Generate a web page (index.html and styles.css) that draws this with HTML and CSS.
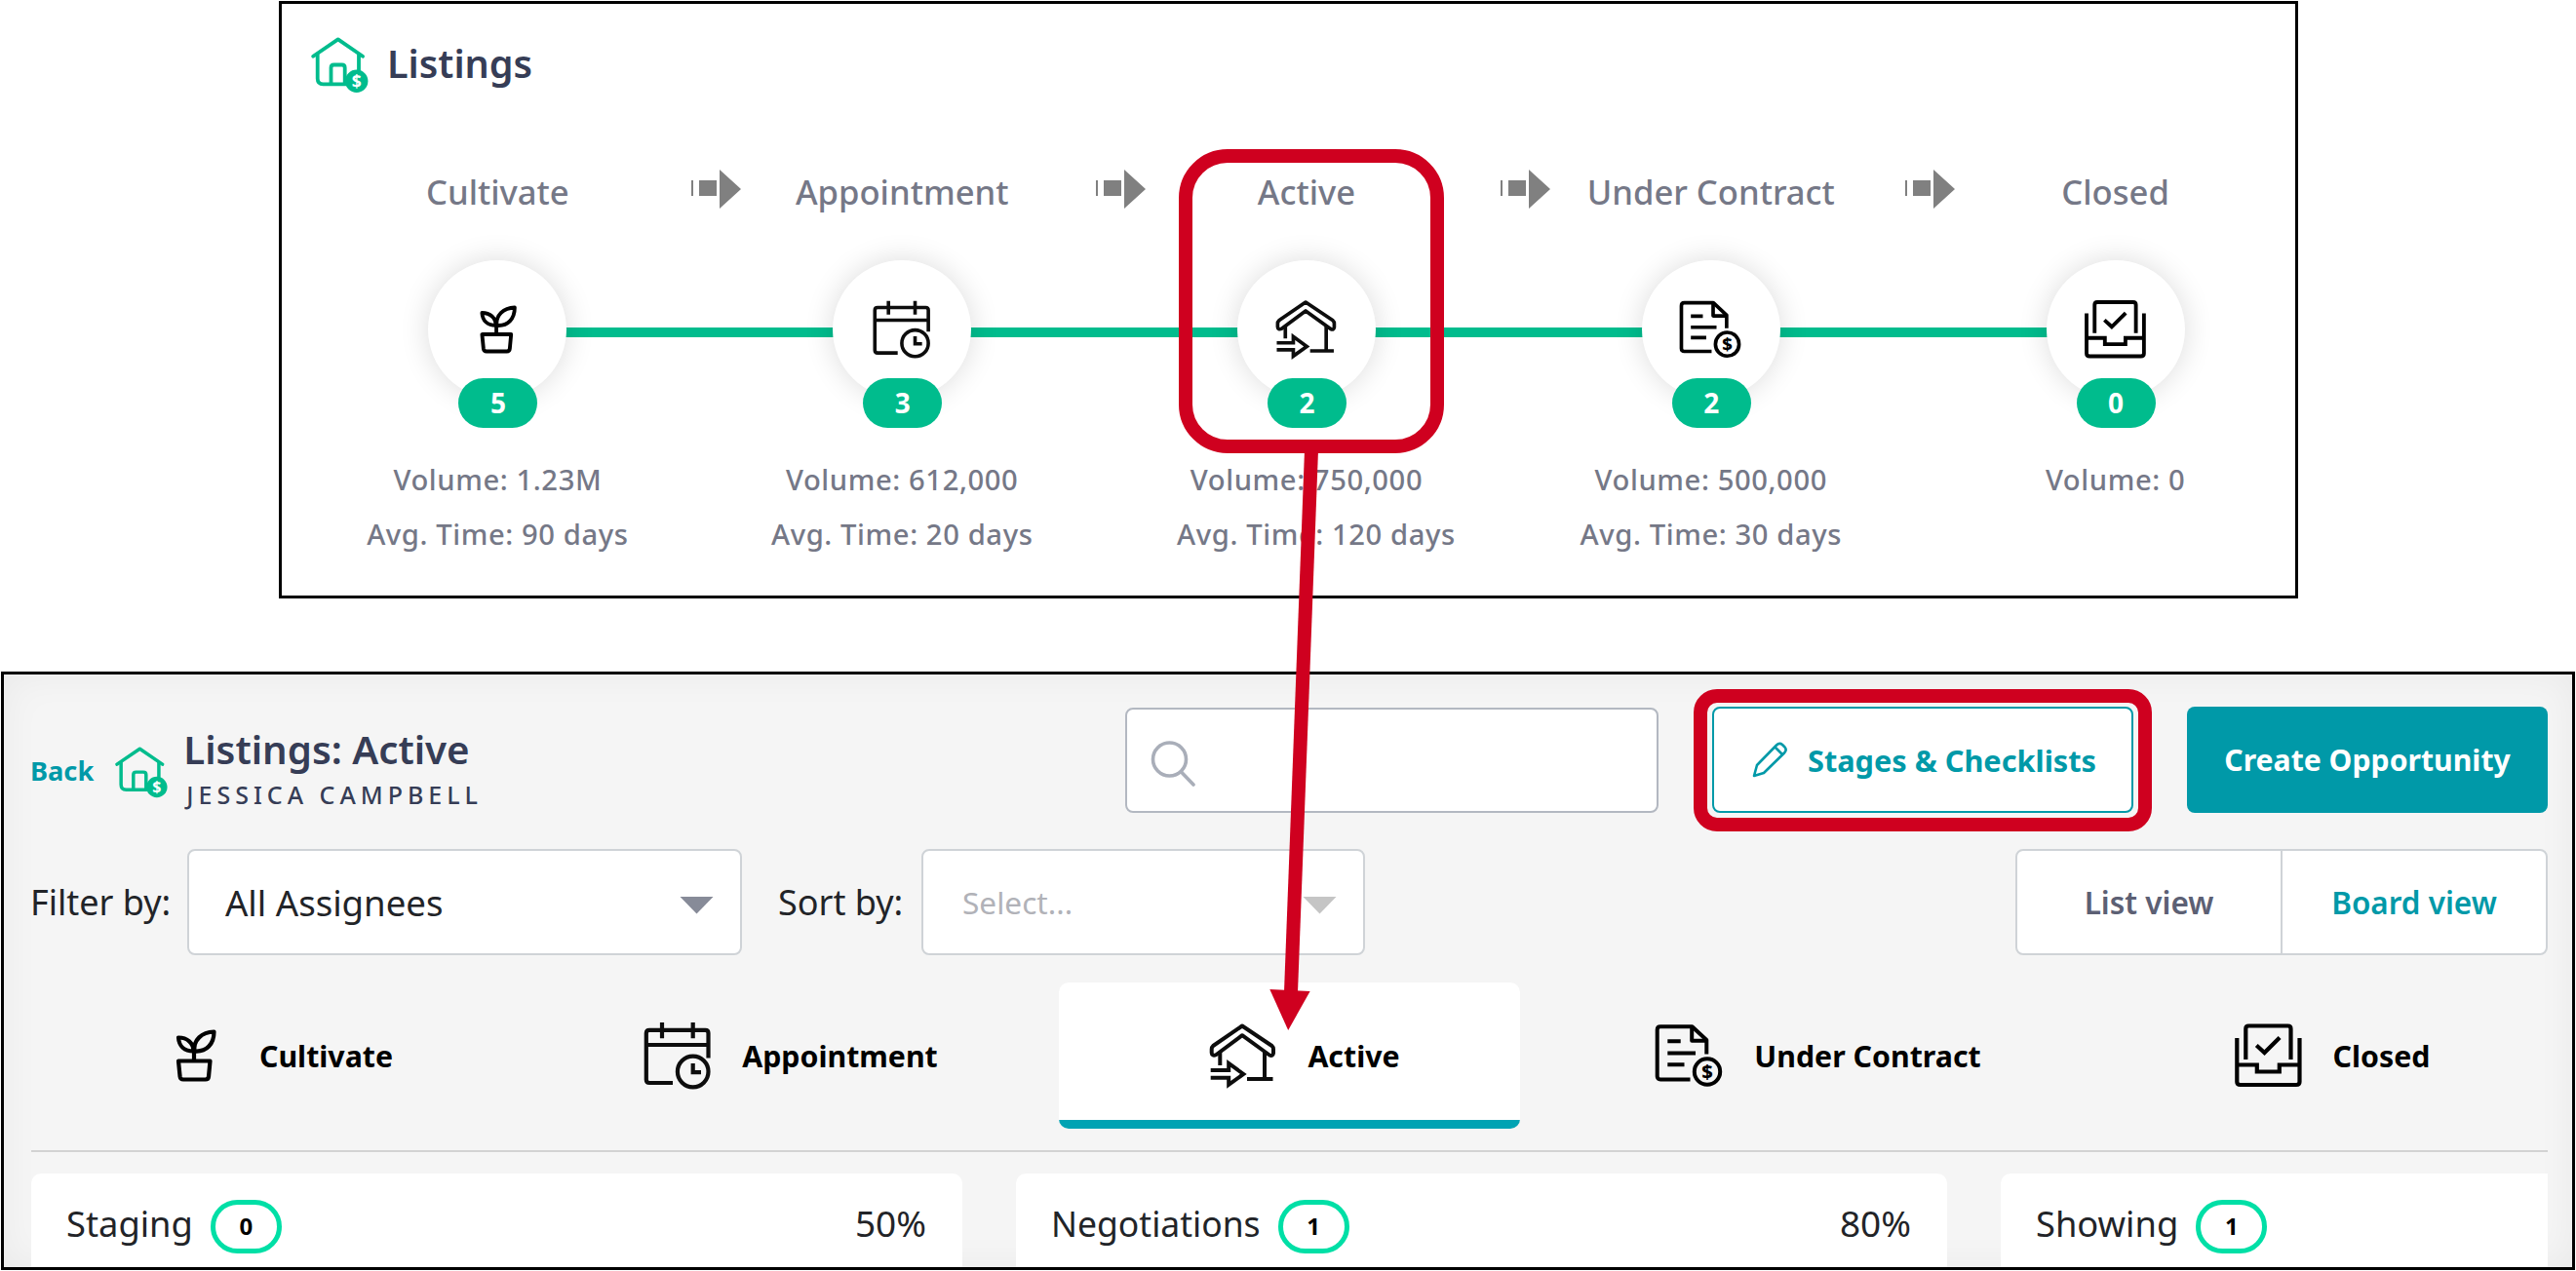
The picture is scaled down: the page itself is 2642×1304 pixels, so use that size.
FILE: index.html
```html
<!DOCTYPE html>
<html lang="en">
<head>
  <meta charset="UTF-8" />
  <title>Listings</title>
  <meta name="viewport" content="width=device-width, initial-scale=1.0" />
  <link rel="stylesheet" href="styles.css">
</head>
<body>
  <!-- Shared icons -->
  <svg class="sprite" width="0" height="0" aria-hidden="true">
    <symbol id="icon-listing" viewBox="0 0 60 60">
      <g fill="none" stroke="#00bc8d" stroke-width="3.8" stroke-linejoin="round" stroke-linecap="round">
        <path d="M2.2 19.8 27.7 2.4 53 19.8" />
        <path d="M6.7 18V42.5Q6.7 48.3 12.5 48.3H38M49 18V34" />
        <path d="M20.5 48V31.5Q20.5 28.5 23.5 28.5H31.7Q34.7 28.5 34.7 31.5V47" />
      </g>
      <circle cx="46.7" cy="45.3" r="11.7" fill="#00bc8d" />
      <text x="46.7" y="51.6" text-anchor="middle" font-size="17.5" font-weight="700" fill="#fff">$</text>
    </symbol>
    <symbol id="icon-cultivate" viewBox="0 0 72 72">
      <g fill="none" stroke="#000" stroke-width="4.2" stroke-linejoin="round">
        <path d="M35 41V31" />
        <path d="M35.5 31.5C34 20 43 12 55.5 11.5C55.5 24 48 32.5 35.5 31.5Z" />
        <path d="M34.5 31.5C25 31.5 19.5 26 19 17.5C28 17.5 34.5 23 34.5 31.5Z" />
        <path d="M19 41.5H51.5L50 57.5Q49.7 60.5 46.7 60.5H24Q21 60.5 20.6 57.5Z" />
      </g>
    </symbol>
    <symbol id="icon-appointment" viewBox="0 0 72 72">
      <g fill="none" stroke="#0d0d0d" stroke-width="4.2">
        <path d="M31 64H7Q3.8 64 3.8 60.8V13Q3.8 9.8 7 9.8H64.3Q67.5 9.8 67.5 13V38.5" />
        <path d="M3.8 25H67.5M20 2V18.3M51.7 2V18.3" />
        <circle cx="51.7" cy="52.5" r="15.8" />
        <path d="M51.7 44V53.2H60" />
      </g>
    </symbol>
    <symbol id="icon-active" viewBox="0 0 72 72">
      <g fill="none" stroke="#0d0d0d" stroke-width="4" stroke-linejoin="round">
        <path d="M35 5.5 65.5 26Q67 27.3 67 29.5V33.5Q66.5 37 63 35.5L35 15.2 8.5 35Q4 37 3.7 33V29.5Q3.7 27.3 5.2 26Z" />
        <path d="M12.3 32V46M58 32V59.5M40 60H66.5" />
        <path d="M2.700 51H21.200V44L36.300 55 21.200 65.800V58.700H2.700" stroke-linejoin="miter" />
      </g>
    </symbol>
    <symbol id="icon-contract" viewBox="0 0 72 72">
      <g fill="none" stroke="#000" stroke-width="4" stroke-linejoin="round">
        <path d="M36.5 60.5H6Q2.7 60.5 2.7 57.2V9.5Q2.7 6.2 6 6.2H38.5L53.3 20V34.5" />
        <path d="M38.2 7V20.8H53" />
        <path d="M13.3 21.2H26.7M13.3 33.5H42M13.3 45.2H30.5" />
        <circle cx="54" cy="52.5" r="13.2" />
      </g>
      <text x="54" y="60" text-anchor="middle" font-size="20" font-weight="800">$</text>
    </symbol>
    <symbol id="icon-closed" viewBox="0 0 72 72">
      <g fill="none" stroke="#000" stroke-width="4.2">
        <path d="M3.3 18V63Q3.3 66 6.8 66H64Q67.500 66 67.500 63V18" />
        <path d="M3.3 45.500H23.800V52.500H46.800V45.500H67.500" />
        <path d="M12.300 40V8.500Q12.300 5.500 15.300 5.500H55.500Q58.500 5.500 58.500 8.500V40" />
        <path d="M23.300 25.500 31.500 33 47.100 17.500" />
      </g>
    </symbol>
  </svg>

  <!-- Pipeline overview -->
  <section class="pipeline">
    <div class="pipeline-head">
      <svg class="listing-icon"><use href="#icon-listing" /></svg>
      <h1>Listings</h1>
    </div>
    <div class="stages">
      <div class="stage">
        <div class="stage-name">Cultivate
          <svg class="step-arrow" viewBox="0 0 51 40"><path d="M0 11h2v16h-2zM8 11h18v16h-18zM29 0 51 20 29 40z" /></svg>
        </div>
        <div class="bubble"><svg><use href="#icon-cultivate" /></svg><span class="count">5</span></div>
        <p>Volume: 1.23M</p>
        <p>Avg. Time: 90 days</p>
      </div>
      <div class="stage">
        <div class="stage-name">Appointment
          <svg class="step-arrow" viewBox="0 0 51 40"><path d="M0 11h2v16h-2zM8 11h18v16h-18zM29 0 51 20 29 40z" /></svg>
        </div>
        <div class="bubble"><svg class="small"><use href="#icon-appointment" /></svg><span class="count">3</span></div>
        <p>Volume: 612,000</p>
        <p>Avg. Time: 20 days</p>
      </div>
      <div class="stage">
        <div class="stage-name">Active
          <svg class="step-arrow" viewBox="0 0 51 40"><path d="M0 11h2v16h-2zM8 11h18v16h-18zM29 0 51 20 29 40z" /></svg>
        </div>
        <div class="bubble"><svg><use href="#icon-active" /></svg><span class="count">2</span></div>
        <p>Volume: 750,000</p>
        <p class="long">Avg. Time: 120 days</p>
      </div>
      <div class="stage">
        <div class="stage-name">Under Contract
          <svg class="step-arrow" viewBox="0 0 51 40"><path d="M0 11h2v16h-2zM8 11h18v16h-18zM29 0 51 20 29 40z" /></svg>
        </div>
        <div class="bubble"><svg><use href="#icon-contract" /></svg><span class="count">2</span></div>
        <p>Volume: 500,000</p>
        <p>Avg. Time: 30 days</p>
      </div>
      <div class="stage">
        <div class="stage-name">Closed</div>
        <div class="bubble"><svg><use href="#icon-closed" /></svg><span class="count">0</span></div>
        <p>Volume: 0</p>
      </div>
    </div>
  </section>

  <!-- Board -->
  <section class="board">
    <div class="board-head">
      <div class="board-title">
        <a class="back" href="#">Back</a>
        <svg class="listing-icon"><use href="#icon-listing" /></svg>
        <div>
          <h2>Listings: Active</h2>
          <div class="owner">JESSICA CAMPBELL</div>
        </div>
      </div>
      <div class="search">
        <svg viewBox="0 0 46 48"><circle cx="19.5" cy="20" r="17" /><path d="M31.5 33 44 46" /></svg>
      </div>
      <button class="btn btn-outline" type="button">
        <svg viewBox="0 0 44 44"><path d="M5 38 8 27 28 6.5Q31 3.5 34 6L36.5 8.5Q39 11.5 36 14.5L15 35ZM26.5 8.5 34 16" /></svg>
        Stages &amp; Checklists
      </button>
      <button class="btn btn-primary" type="button">Create Opportunity</button>
    </div>

    <div class="filters">
      <span class="filter-label">Filter by:</span>
      <div class="select select-assignee">All Assignees<i class="caret"></i></div>
      <span class="filter-label sort-label">Sort by:</span>
      <div class="select select-sort">Select...<i class="caret"></i></div>
      <div class="view-toggle">
        <span>List view</span>
        <span class="selected">Board view</span>
      </div>
    </div>

    <div class="tabs">
      <div class="tab"><svg><use href="#icon-cultivate" /></svg>Cultivate</div>
      <div class="tab"><svg><use href="#icon-appointment" /></svg>Appointment</div>
      <div class="tab current"><svg><use href="#icon-active" /></svg>Active</div>
      <div class="tab"><svg><use href="#icon-contract" /></svg>Under Contract</div>
      <div class="tab"><svg><use href="#icon-closed" /></svg>Closed</div>
    </div>

    <div class="columns">
      <div class="column">Staging<span class="pill">0</span><span class="percent">50%</span></div>
      <div class="column negotiations">Negotiations<span class="pill">1</span><span class="percent">80%</span></div>
      <div class="column last">Showing<span class="pill">1</span></div>
    </div>
  </section>

  <!-- Red callouts drawn over both panels -->
  <div class="callout callout-stage"></div>
  <div class="callout callout-button"></div>
  <svg class="callout-arrow" viewBox="0 0 60 600">
    <path d="M45 4 24 560" />
    <polygon points="2.3,557 43.6,559 21.2,599" />
  </svg>
</body>
</html>
```
FILE: styles.css
```css
:root {
  --green: #00bc8d;
  --mint: #00dfa6;
  --teal: #0099a8;
  --red: #cf001f;
  --navy: #363d56;
  --muted: #757887;
  --border: #cfd3d7;
}
* {
  box-sizing: border-box;
}
body {
  position: relative;
  width: 2642px;
  height: 1304px;
  margin: 0;
  padding: 1px 1px 0 1px;
  overflow: hidden;
  background: #fff;
  color: #222428;
  font-family: "Noto Sans", "Open Sans", sans-serif;
}
h1, h2, p {
  margin: 0;
}
.sprite {
  display: none;
}

/* Pipeline overview */
.pipeline {
  width: 2071px;
  height: 613px;
  margin-left: 285px;
  padding: 30px 0 0 14px;
  border: 3px solid #000;
  background: #fff;
}
.pipeline-head {
  display: flex;
  align-items: center;
  gap: 18px;
  height: 60px;
  padding-left: 16px;
}
.pipeline-head .listing-icon {
  width: 60px;
  height: 60px;
  margin-top: 8px;
}
.pipeline-head h1 {
  margin-top: 1px;
  color: var(--navy);
  font-size: 39.6px;
  font-weight: 600;
}
.stages {
  display: flex;
  margin-top: 77px;
}
.stage {
  position: relative;
  flex: 0 0 414.8px;
  color: var(--muted);
  text-align: center;
  font-weight: 500;
}
.stage-name {
  position: relative;
  height: 50px;
  line-height: 51px;
  font-size: 34.6px;
}
.step-arrow {
  position: absolute;
  top: 3px;
  right: -42.5px;
  width: 51px;
  height: 40px;
  fill: #808080;
}
/* connecting line between two bubbles */
.stage:not(:last-child)::before {
  content: "";
  position: absolute;
  top: 165px;
  left: 50%;
  width: 100%;
  height: 10px;
  background: var(--green);
}
.bubble {
  position: relative;
  z-index: 1;
  display: flex;
  align-items: center;
  justify-content: center;
  width: 142px;
  height: 142px;
  margin: 46px auto 55px;
  border-radius: 50%;
  background: #fff;
  box-shadow: 0 0 30px rgba(0, 0, 0, 0.14);
}
.bubble svg {
  width: 66px;
  height: 66px;
}
.bubble svg.small {
  width: 62px;
  height: 62px;
}
.count {
  position: absolute;
  top: 121px;
  left: 31px;
  width: 81px;
  height: 51px;
  border-radius: 26px;
  background: var(--green);
  color: #fff;
  font-size: 28px;
  font-weight: 700;
  line-height: 50px;
}
.stage p {
  font-size: 29.2px;
  letter-spacing: 0.6px;
  line-height: 56px;
}
.stage p.long {
  padding-left: 20px;
}

/* Board */
.board {
  width: 2640px;
  height: 614px;
  margin-top: 75px;
  padding: 33px 25px 0 28px;
  border: 3px solid #000;
  background: #f5f5f5;
  box-shadow: inset 0 0 40px rgba(0, 0, 0, 0.05);
  overflow: hidden;
}
.board-head {
  display: flex;
  align-items: center;
  height: 109px;
}
.board-title {
  display: flex;
  flex: 1;
  align-items: center;
  margin-top: 25px;
}
.back {
  margin: -4px 22px 0 -1px;
  color: var(--teal);
  font-size: 27.2px;
  font-weight: 700;
  text-decoration: none;
}
.board-title .listing-icon {
  width: 55px;
  height: 55px;
  margin: 3px 15px 0 0;
}
.board-title h2 {
  color: var(--navy);
  font-size: 40.2px;
  font-weight: 600;
  line-height: 46px;
}
.owner {
  color: var(--navy);
  font-size: 25px;
  font-weight: 500;
  letter-spacing: 5px;
  line-height: 46px;
  padding-left: 3px;
}
.search {
  width: 547px;
  height: 108px;
  padding: 31px 0 0 24px;
  border: 2px solid #b3b8c1;
  border-radius: 8px;
  background: #fff;
}
.search svg {
  width: 46px;
  height: 48px;
  fill: none;
  stroke: #a9aeb9;
  stroke-width: 3.6;
  stroke-linecap: round;
}
.btn {
  display: flex;
  align-items: center;
  justify-content: center;
  height: 109px;
  margin-left: 55px;
  border: none;
  border-radius: 8px;
  font-family: inherit;
  font-size: 30.7px;
  font-weight: 700;
  white-space: nowrap;
}
.btn-outline {
  gap: 16px;
  width: 432px;
  border: 2px solid var(--teal);
  background: #fff;
  color: var(--teal);
}
.btn-outline svg {
  width: 44px;
  height: 44px;
  fill: none;
  stroke: var(--teal);
  stroke-width: 2.6;
  stroke-linejoin: round;
}
.btn-primary {
  width: 370px;
  background: var(--teal);
  color: #fff;
  font-size: 30.2px;
}

.filters {
  display: flex;
  align-items: center;
  height: 109px;
  margin-top: 37px;
  font-size: 36px;
}
.filter-label {
  width: 161px;
  margin-left: -1px;
}
.sort-label {
  width: 147px;
  margin-left: 37px;
}
.select {
  display: flex;
  align-items: center;
  justify-content: space-between;
  height: 109px;
  border: 2px solid var(--border);
  border-radius: 8px;
  background: #fff;
}
.select-assignee {
  width: 569px;
  padding: 0 27px 0 37px;
  font-size: 36.6px;
}
.select-sort {
  width: 455px;
  padding: 0 27px 0 40px;
  color: #b1b2b8;
  font-size: 31.6px;
}
.caret {
  width: 35px;
  height: 18px;
  margin-top: 6px;
  background: #878b98;
  clip-path: polygon(0 0, 100% 0, 50% 100%);
}
.select-sort .caret {
  background: #c5c5c5;
}
.view-toggle {
  display: flex;
  width: 546px;
  height: 109px;
  margin-left: auto;
  border: 2px solid var(--border);
  border-radius: 8px;
  background: #fff;
}
.view-toggle span {
  flex: 1;
  color: #5c6074;
  font-size: 31.5px;
  font-weight: 600;
  line-height: 105px;
  text-align: center;
}
.view-toggle .selected {
  border-left: 2px solid var(--border);
  color: var(--teal);
}

.tabs {
  display: flex;
  gap: 54px;
  margin-top: 28px;
}
.tab {
  display: flex;
  flex: 1;
  align-items: center;
  justify-content: center;
  height: 150px;
  border-radius: 10px;
  color: #000;
  font-size: 30.3px;
  font-weight: 700;
  white-space: nowrap;
}
.tab svg {
  width: 72px;
  height: 72px;
  margin: 0 30px;
}
.tab.current {
  background: linear-gradient(#fff 141px, #00a3b3 141px);
}

.columns {
  display: flex;
  gap: 55px;
  margin-top: 22px;
  padding-top: 22px;
  border-top: 2px solid #d2d2d2;
}
.column {
  display: flex;
  flex: 0 0 955px;
  height: 120px;
  padding: 21px 37px 0 36px;
  border-radius: 10px;
  background: #fff;
  font-size: 36.3px;
  line-height: 60px;
}
.column.negotiations {
  font-size: 35.5px;
}
.column.last {
  flex: 1;
  border-top-right-radius: 0;
}
.pill {
  width: 73px;
  height: 55px;
  margin: 6px 0 0 18px;
  border: 5px solid var(--mint);
  border-radius: 28px;
  color: #000;
  font-size: 24px;
  font-weight: 700;
  line-height: 44px;
  text-align: center;
}
.percent {
  margin-left: auto;
  font-size: 37px;
}

/* Callouts */
.callout {
  position: absolute;
  border: 14px solid var(--red);
}
.callout-stage {
  top: 153px;
  left: 1209px;
  width: 272px;
  height: 312px;
  z-index: 2;
  border-radius: 50px;
}
.callout-button {
  top: 707px;
  left: 1737px;
  width: 470px;
  height: 146px;
  border-radius: 24px;
}
.callout-arrow {
  position: absolute;
  top: 458px;
  left: 1300px;
  z-index: 2;
  width: 60px;
  height: 600px;
  fill: var(--red);
  stroke: none;
}
.callout-arrow path {
  stroke: var(--red);
  stroke-width: 14;
}
```
